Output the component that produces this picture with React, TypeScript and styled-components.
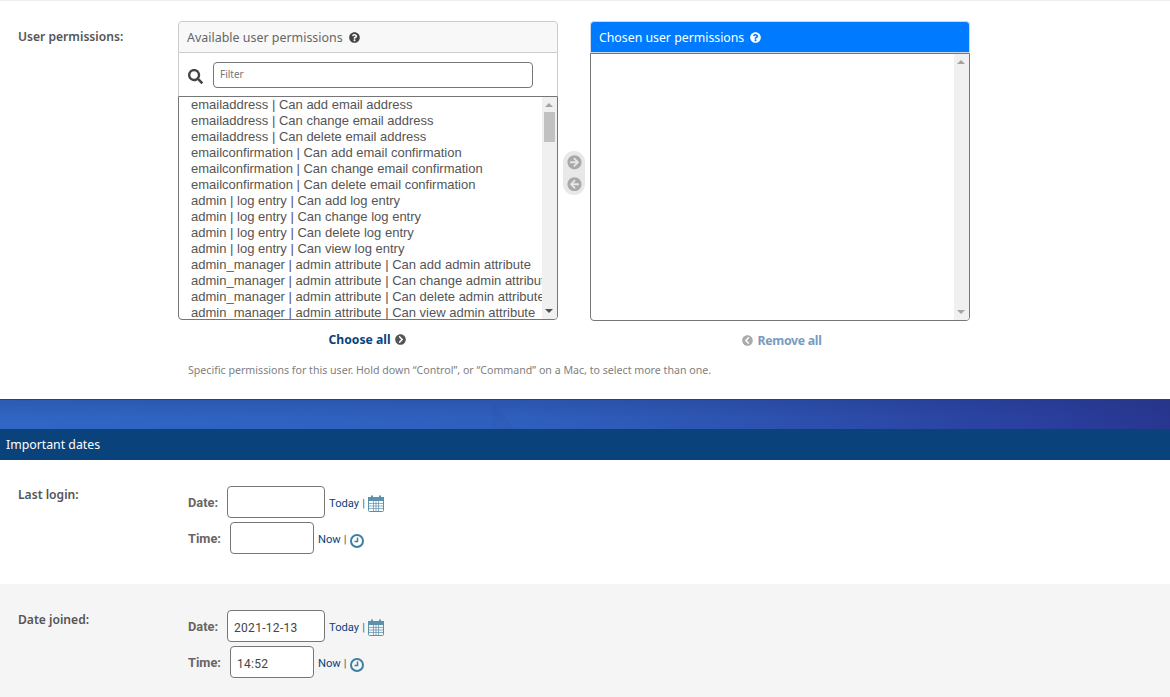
import React from 'react'
import styled, { createGlobalStyle } from 'styled-components'
import { FaArrowCircleLeft, FaArrowCircleRight, FaChevronCircleLeft, FaChevronCircleRight, FaQuestionCircle, FaSearch } from 'react-icons/fa'

const GlobalStyle = createGlobalStyle`
  html, body {
    margin: 0;
    height: 697px;
    overflow: hidden;
    background: #fff;
    font-family: "Noto Sans", "Open Sans", sans-serif;
  }
  * {
    box-sizing: border-box;
  }
`

const Page = styled.div`
  width: 1170px;
`

const PermissionRow = styled.section`
  display: flex;
  height: 399px;
  padding: 20px 0 0 18px;
  border-top: 1px solid #eee;
`

const FieldLabel = styled.label<{ $top: number }>`
  width: 160px;
  flex: none;
  padding-top: ${(p) => p.$top}px;
  font-size: 12.1px;
  font-weight: 600;
  line-height: 18px;
  color: #555;
`

const SelectorColumn = styled.div`
  display: flex;
  flex-direction: column;
`

const Selector = styled.div`
  display: flex;
  align-items: flex-start;
`

const Side = styled.div`
  width: 380px;
  flex: none;
`

const SideTitle = styled.h2<{ $chosen?: boolean }>`
  display: flex;
  align-items: center;
  gap: 6px;
  height: 32px;
  margin: 0;
  padding: 0 8px;
  font-size: ${(p) => (p.$chosen ? '12.3px' : '12.45px')};
  font-weight: 400;
  color: ${(p) => (p.$chosen ? '#fff' : '#666')};
  background: ${(p) => (p.$chosen ? '#007bff' : '#f8f8f8')};
  border: 1px solid ${(p) => (p.$chosen ? '#ccd9e8' : '#ccc')};
  border-radius: 4px 4px 0 0;
  svg {
    width: 11px;
    height: 11px;
    color: ${(p) => (p.$chosen ? '#fff' : '#444')};
  }
`

const FilterBar = styled.div`
  display: flex;
  align-items: center;
  height: 43px;
  padding: 0 24px 0 9px;
  border: 1px solid #ccc;
  border-top: 0;
  border-bottom: 0;
  svg {
    width: 15px;
    height: 15px;
    margin: 3px 10px 0 0;
    color: #444;
  }
`

const FilterInput = styled.input`
  flex: 1;
  min-width: 0;
  height: 26px;
  padding: 0 6px 2px;
  font-family: "Noto Sans", sans-serif;
  font-size: 10px;
  color: #333;
  border: 1px solid #767676;
  border-radius: 4px;
  &::placeholder {
    color: #757575;
    opacity: 1;
  }
`

const ListFrame = styled.div`
  position: relative;
`

const ListBox = styled.select<{ $height: number }>`
  display: block;
  width: 100%;
  height: ${(p) => p.$height}px;
  margin: 0;
  padding: 0;
  font-family: "Liberation Sans", Arial, sans-serif;
  font-size: 13px;
  color: #555;
  background: #fff;
  border: 1px solid #767676;
  border-radius: 0 0 4px 4px;
  outline: none;
  overflow: hidden;
  option {
    min-height: 16px;
    padding: 0 12px;
    line-height: 16px;
  }
`

const ScrollRail = styled.div`
  position: absolute;
  top: 1px;
  right: 1px;
  bottom: 1px;
  width: 15px;
  background: #f0f0f0;
  border-radius: 0 0 3px 0;
  &::before,
  &::after {
    content: "";
    position: absolute;
    left: 3px;
    border-left: 4.5px solid transparent;
    border-right: 4.5px solid transparent;
  }
  &::before {
    top: 6px;
    border-bottom: 4px solid #a3a3a3;
  }
  &::after {
    bottom: 6px;
    border-top: 4px solid #505050;
  }
`

const ChosenRail = styled(ScrollRail)`
  &::after {
    border-top-color: #a3a3a3;
  }
`

const ScrollThumb = styled.div`
  position: absolute;
  top: 15px;
  left: 2px;
  width: 11px;
  height: 30px;
  background: #c1c1c1;
`

const Action = styled.a<{ $off?: boolean }>`
  display: flex;
  align-items: center;
  justify-content: center;
  gap: 4px;
  margin-top: 9px;
  height: 20px;
  padding: ${(p) => (p.$off ? '0 0 0 4px' : '0 2px 0 0')};
  font-size: ${(p) => (p.$off ? '12.3px' : '12.2px')};
  font-weight: 700;
  letter-spacing: ${(p) => (p.$off ? '-0.3px' : '0')};
  color: ${(p) => (p.$off ? '#7a9bbb' : '#0a437c')};
  svg {
    width: 11px;
    height: 11px;
    color: ${(p) => (p.$off ? '#aaa' : '#555')};
  }
`

const MoveButtons = styled.div`
  flex: none;
  display: flex;
  flex-direction: column;
  align-items: center;
  gap: 7px;
  width: 22px;
  height: 44px;
  margin: 130px 5px 0;
  padding: 4px 0;
  background: #e8e8e8;
  border-radius: 11px;
  svg {
    width: 15px;
    height: 15px;
    color: #a9a9a9;
  }
`

const Help = styled.p`
  margin: 12px 0 0 10px;
  font-size: 10.63px;
  line-height: 16px;
  color: #808080;
`

const Banner = styled.div`
  position: relative;
  height: 30px;
  overflow: hidden;
  border-top: 1px solid #2b3f7e;
  background:
    linear-gradient(180deg, rgba(30, 50, 110, 0.22), rgba(30, 50, 110, 0) 65%),
    linear-gradient(90deg, #3066c4 0%, #2f5fbe 45%, #2d56b4 60%, #2a3e9e 90%, #28368f 100%);
  &::after {
    content: "";
    position: absolute;
    top: 0;
    left: 492px;
    width: 23px;
    height: 30px;
    background: rgba(40, 70, 160, 0.12);
    clip-path: polygon(0 0, 100% 100%, 0 100%);
  }
`

const SectionHeader = styled.h2`
  height: 31px;
  margin: 0;
  padding-left: 6px;
  font-size: 12.3px;
  font-weight: 400;
  line-height: 31px;
  color: #fff;
  background: #0a437c;
`

const DateRow = styled.section<{ $alt?: boolean; $height: number }>`
  display: flex;
  height: ${(p) => p.$height}px;
  padding: 26px 0 0 18px;
  background: ${(p) => (p.$alt ? '#f5f5f5' : '#fff')};
`

const DateFields = styled.div`
  display: flex;
  flex-direction: column;
  gap: 4px;
  padding-left: 10px;
`

const DateLine = styled.div`
  display: flex;
  align-items: center;
  height: 32px;
`

const SmallLabel = styled.span`
  margin-right: 9px;
  font-family: Roboto, sans-serif;
  font-size: 12.8px;
  font-weight: 700;
  color: #666;
`

const DateInput = styled.input<{ $width: number }>`
  width: ${(p) => p.$width}px;
  height: 32px;
  padding: 3px 6px 0;
  font-family: Roboto, sans-serif;
  font-size: 12px;
  letter-spacing: 0.3px;
  color: #444;
  background: #fff;
  border: 1px solid #767676;
  border-radius: 4px;
`

const Shortcuts = styled.span`
  display: flex;
  align-items: center;
  margin: 2px 0 0 4px;
  font-family: Roboto, sans-serif;
  font-size: 11.2px;
  color: #555;
  a {
    color: #0a437c;
  }
  b {
    font-weight: 400;
    margin: 0 3px 0 3px;
  }
`

const ClockShift = styled.span`
  display: flex;
  margin: 3px 0 0 1px;
`

const permissions = [
  'emailaddress | Can add email address',
  'emailaddress | Can change email address',
  'emailaddress | Can delete email address',
  'emailconfirmation | Can add email confirmation',
  'emailconfirmation | Can change email confirmation',
  'emailconfirmation | Can delete email confirmation',
  'admin | log entry | Can add log entry',
  'admin | log entry | Can change log entry',
  'admin | log entry | Can delete log entry',
  'admin | log entry | Can view log entry',
  'admin_manager | admin attribute | Can add admin attribute',
  'admin_manager | admin attribute | Can change admin attribute',
  'admin_manager | admin attribute | Can delete admin attribute',
  'admin_manager | admin attribute | Can view admin attribute',
]

function CalendarIcon() {
  return (
    <svg width="16" height="17" viewBox="0 0 16 17" fill="none" stroke="#5b90b0" strokeWidth="1">
      <rect x="0.5" y="2.5" width="15" height="14" rx="1" />
      <rect x="0.5" y="2.5" width="15" height="3" fill="#5b90b0" />
      <path d="M4 .5v3M12 .5v3" strokeWidth="2" />
      <path d="M5.5 6v10M8 6v10M10.5 6v10M1 8.5h14M1 11h14M1 13.5h14" strokeWidth="0.7" />
    </svg>
  )
}

function ClockIcon() {
  return (
    <svg width="14" height="14" viewBox="0 0 14 14" fill="none" stroke="#3f7ea3">
      <circle cx="7" cy="7" r="6" strokeWidth="2" />
      <path d="M7.5 3.5v4h-3" strokeWidth="1.5" />
    </svg>
  )
}

function DateTimeFields({ date, time }: { date?: string; time?: string }) {
  return (
    <DateFields>
      <DateLine>
        <SmallLabel>Date:</SmallLabel>
        <DateInput $width={98} defaultValue={date} />
        <Shortcuts>
          <a>Today</a>
          <b>|</b>
          <CalendarIcon />
        </Shortcuts>
      </DateLine>
      <DateLine>
        <SmallLabel>Time:</SmallLabel>
        <DateInput $width={84} defaultValue={time} />
        <Shortcuts>
          <a>Now</a>
          <b>|</b>
          <ClockShift>
            <ClockIcon />
          </ClockShift>
        </Shortcuts>
      </DateLine>
    </DateFields>
  )
}

export default function App() {
  return (
    <Page>
      <GlobalStyle />
      <PermissionRow>
        <FieldLabel $top={7}>User permissions:</FieldLabel>
        <SelectorColumn>
          <Selector>
            <Side>
              <SideTitle>
                Available user permissions <FaQuestionCircle />
              </SideTitle>
              <FilterBar>
                <FaSearch />
                <FilterInput placeholder="Filter" />
              </FilterBar>
              <ListFrame>
                <ListBox multiple $height={224}>
                  {permissions.map((name) => (
                    <option key={name}>{name}</option>
                  ))}
                  <option>auth | group | Can add group</option>
                </ListBox>
                <ScrollRail>
                  <ScrollThumb />
                </ScrollRail>
              </ListFrame>
              <Action>
                Choose all <FaChevronCircleRight />
              </Action>
            </Side>
            <MoveButtons>
              <FaArrowCircleRight />
              <FaArrowCircleLeft />
            </MoveButtons>
            <Side>
              <SideTitle $chosen>
                Chosen user permissions <FaQuestionCircle />
              </SideTitle>
              <ListFrame>
                <ListBox multiple $height={268} />
                <ChosenRail />
              </ListFrame>
              <Action $off>
                <FaChevronCircleLeft /> Remove all
              </Action>
            </Side>
          </Selector>
          <Help>Specific permissions for this user. Hold down “Control”, or “Command” on a Mac, to select more than one.</Help>
        </SelectorColumn>
      </PermissionRow>
      <Banner />
      <SectionHeader>Important dates</SectionHeader>
      <DateRow $height={124}>
        <FieldLabel $top={0}>Last login:</FieldLabel>
        <DateTimeFields />
      </DateRow>
      <DateRow $alt $height={120}>
        <FieldLabel $top={1}>Date joined:</FieldLabel>
        <DateTimeFields date="2021-12-13" time="14:52" />
      </DateRow>
    </Page>
  )
}
